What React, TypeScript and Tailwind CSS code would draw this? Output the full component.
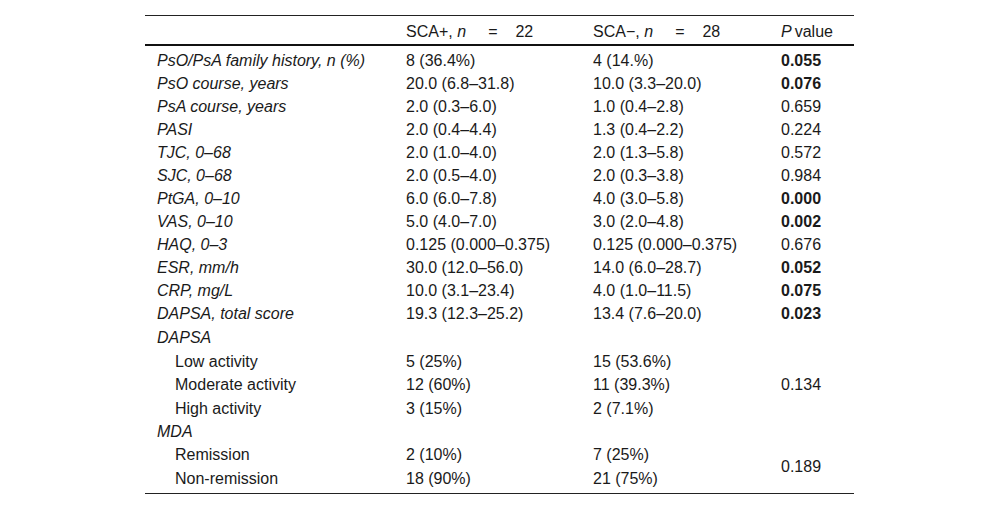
const rows: { label: string; a: string; b: string; p: string; bold?: boolean }[] = [
  { label: "PsO/PsA family history, n (%)", a: "8 (36.4%)", b: "4 (14.%)", p: "0.055", bold: true },
  { label: "PsO course, years", a: "20.0 (6.8–31.8)", b: "10.0 (3.3–20.0)", p: "0.076", bold: true },
  { label: "PsA course, years", a: "2.0 (0.3–6.0)", b: "1.0 (0.4–2.8)", p: "0.659" },
  { label: "PASI", a: "2.0 (0.4–4.4)", b: "1.3 (0.4–2.2)", p: "0.224" },
  { label: "TJC, 0–68", a: "2.0 (1.0–4.0)", b: "2.0 (1.3–5.8)", p: "0.572" },
  { label: "SJC, 0–68", a: "2.0 (0.5–4.0)", b: "2.0 (0.3–3.8)", p: "0.984" },
  { label: "PtGA, 0–10", a: "6.0 (6.0–7.8)", b: "4.0 (3.0–5.8)", p: "0.000", bold: true },
  { label: "VAS, 0–10", a: "5.0 (4.0–7.0)", b: "3.0 (2.0–4.8)", p: "0.002", bold: true },
  { label: "HAQ, 0–3", a: "0.125 (0.000–0.375)", b: "0.125 (0.000–0.375)", p: "0.676" },
  { label: "ESR, mm/h", a: "30.0 (12.0–56.0)", b: "14.0 (6.0–28.7)", p: "0.052", bold: true },
  { label: "CRP, mg/L", a: "10.0 (3.1–23.4)", b: "4.0 (1.0–11.5)", p: "0.075", bold: true },
  { label: "DAPSA, total score", a: "19.3 (12.3–25.2)", b: "13.4 (7.6–20.0)", p: "0.023", bold: true },
];

// pt-[6px] nudges the glyphs down so they sit where the reference rows do
const cell = "flex items-center pl-3 pt-[6px] whitespace-nowrap";

function Sub({ label, a, b, h }: { label: string; a: string; b: string; h: string }) {
  return (
    <>
      <div className={`${cell} ${h} pl-[30px]`}>{label}</div>
      <div className={`${cell} ${h}`}>{a}</div>
      <div className={`${cell} ${h}`}>{b}</div>
    </>
  );
}

export default function App() {
  return (
    <div className="w-[1000px] h-[511px] bg-white pt-[15px] font-['Liberation_Sans',Arial,sans-serif] text-[16px] leading-[18px] text-[#1a1a1a]">
      <div className="ml-[145px] w-[709px] border-t border-[#222]">
        {/* header */}
        <div className="grid grid-cols-[249px_187px_188px_85px] h-[30px] border-b-2 border-[#111]">
          <div />
          <div className="flex items-center pl-3 pt-[4px] whitespace-pre">
            SCA+, <i>n</i>{"     =    22"}
          </div>
          <div className="flex items-center pl-3 pt-[4px] whitespace-pre">
            SCA−, <i>n</i>{"     =    28"}
          </div>
          <div className="flex items-center pl-3 pt-[4px]">
            <i>P</i>
            <span className="ml-[3px]">value</span>
          </div>
        </div>

        <div className="grid grid-cols-[249px_187px_188px_85px] border-b border-[#222] pb-[5px]">
          {rows.map((r) => (
            <div key={r.label} className="contents">
              <div className={`${cell} h-[23px] italic`}>{r.label}</div>
              <div className={`${cell} h-[23px]`}>{r.a}</div>
              <div className={`${cell} h-[23px]`}>{r.b}</div>
              <div className={`${cell} h-[23px] ${r.bold ? "font-bold" : ""}`}>{r.p}</div>
            </div>
          ))}

          <div className={`${cell} h-[25px] italic col-span-4`}>DAPSA</div>
          <Sub label="Low activity" a="5 (25%)" b="15 (53.6%)" h="h-[23px]" />
          <div className={`${cell} row-span-3`}>0.134</div>
          <Sub label="Moderate activity" a="12 (60%)" b="11 (39.3%)" h="h-[24px]" />
          <Sub label="High activity" a="3 (15%)" b="2 (7.1%)" h="h-[23px]" />

          <div className={`${cell} h-[23px] italic col-span-4`}>MDA</div>
          <Sub label="Remission" a="2 (10%)" b="7 (25%)" h="h-[24px]" />
          <div className={`${cell} row-span-2`}>0.189</div>
          <Sub label="Non-remission" a="18 (90%)" b="21 (75%)" h="h-[24px]" />
        </div>
      </div>
    </div>
  );
}
